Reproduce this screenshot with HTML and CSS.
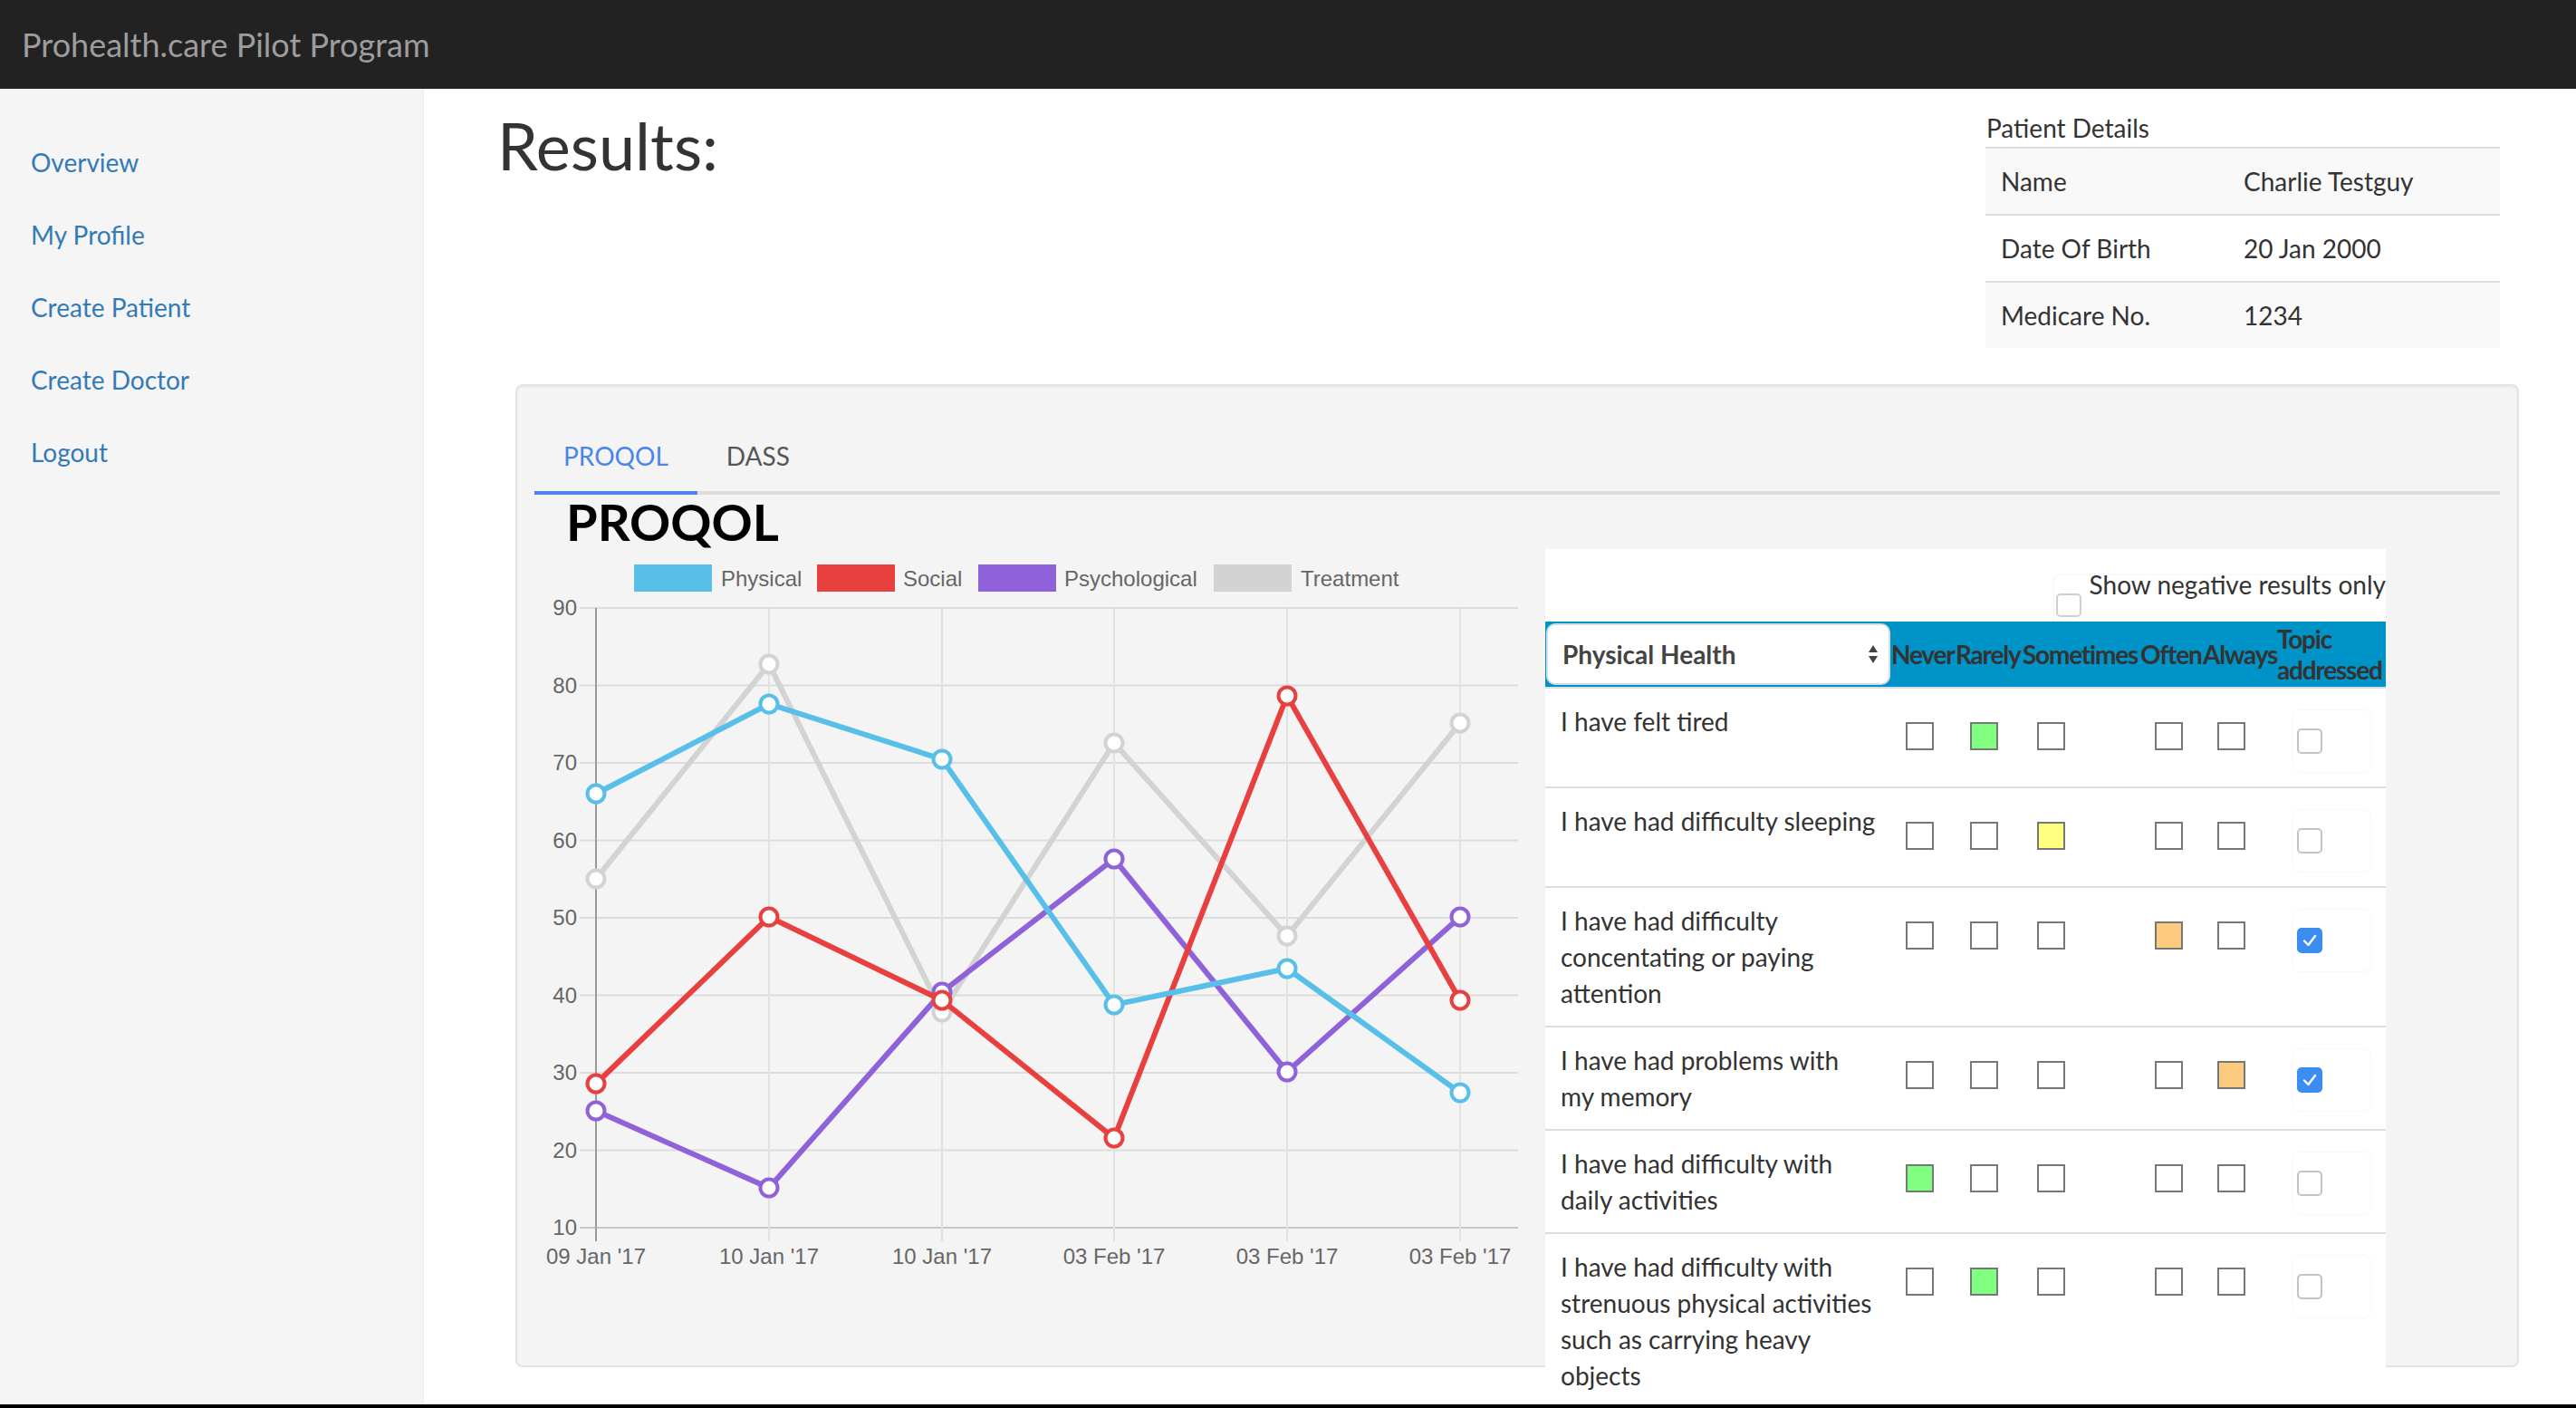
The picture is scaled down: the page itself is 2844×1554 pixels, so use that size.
FILE: index.html
```html
<!DOCTYPE html>
<html lang="en">
<head>
<meta charset="utf-8">
<title>Prohealth.care Pilot Program</title>
<link rel="stylesheet" href="styles.css">
</head>
<body>
<header class="navbar"><a class="brand" href="#">Prohealth.care Pilot Program</a></header>
<div class="layout">
  <nav class="sidebar">
    <ul class="side-nav">
      <li><a href="#">Overview</a></li>
      <li><a href="#">My Profile</a></li>
      <li><a href="#">Create Patient</a></li>
      <li><a href="#">Create Doctor</a></li>
      <li><a href="#">Logout</a></li>
    </ul>
  </nav>
  <main class="main">
    <div class="page-head">
      <h1 class="page-title">Results:</h1>
      <table class="details">
        <caption>Patient Details</caption>
        <tbody>
          <tr class="striped"><td class="dl">Name</td><td>Charlie Testguy</td></tr>
          <tr><td class="dl">Date Of Birth</td><td>20 Jan 2000</td></tr>
          <tr class="striped"><td class="dl">Medicare No.</td><td>1234</td></tr>
        </tbody>
      </table>
    </div>

    <section class="panel">
      <ul class="tabs">
        <li class="tab active">PROQOL</li>
        <li class="tab">DASS</li>
      </ul>
      <h2 class="survey-title">PROQOL</h2>
      <div class="survey-body">
        <div class="chart">
          <svg class="chart-svg" width="1100" height="820" viewBox="590 606 1100 820">
            <g>
              <rect class="lg-box" x="700" y="623" width="86" height="30" fill="#58c0e8"/>
              <text class="lg-text" x="796" y="647">Physical</text>
              <rect class="lg-box" x="902" y="623" width="86" height="30" fill="#e8403f"/>
              <text class="lg-text" x="997" y="647">Social</text>
              <rect class="lg-box" x="1080" y="623" width="86" height="30" fill="#9062da"/>
              <text class="lg-text" x="1175" y="647">Psychological</text>
              <rect class="lg-box" x="1340" y="623" width="86" height="30" fill="#d3d3d3"/>
              <text class="lg-text" x="1436" y="647">Treatment</text>
            </g>
            <g class="grid-h">
              <line x1="640" y1="671" x2="1676" y2="671"/>
              <line x1="640" y1="756.5" x2="1676" y2="756.5"/>
              <line x1="640" y1="842" x2="1676" y2="842"/>
              <line x1="640" y1="927.5" x2="1676" y2="927.5"/>
              <line x1="640" y1="1013" x2="1676" y2="1013"/>
              <line x1="640" y1="1098.5" x2="1676" y2="1098.5"/>
              <line x1="640" y1="1184" x2="1676" y2="1184"/>
              <line x1="640" y1="1269.5" x2="1676" y2="1269.5"/>
              <line class="base" x1="640" y1="1355" x2="1676" y2="1355"/>
            </g>
            <g class="grid-v">
              <line x1="849" y1="671" x2="849" y2="1370"/>
              <line x1="1040" y1="671" x2="1040" y2="1370"/>
              <line x1="1230" y1="671" x2="1230" y2="1370"/>
              <line x1="1421" y1="671" x2="1421" y2="1370"/>
              <line x1="1612" y1="671" x2="1612" y2="1370"/>
              <line class="axis" x1="658" y1="671" x2="658" y2="1370"/>
            </g>
            <g class="tick-y">
              <text x="637" y="679">90</text>
              <text x="637" y="764.5">80</text>
              <text x="637" y="850">70</text>
              <text x="637" y="935.5">60</text>
              <text x="637" y="1021">50</text>
              <text x="637" y="1106.5">40</text>
              <text x="637" y="1192">30</text>
              <text x="637" y="1277.5">20</text>
              <text x="637" y="1363">10</text>
            </g>
            <g class="tick-x">
              <text x="658" y="1395">09 Jan '17</text>
              <text x="849" y="1395">10 Jan '17</text>
              <text x="1040" y="1395">10 Jan '17</text>
              <text x="1230" y="1395">03 Feb '17</text>
              <text x="1421" y="1395">03 Feb '17</text>
              <text x="1612" y="1395">03 Feb '17</text>
            </g>

            <g class="series s-treat">
              <polyline points="658,970 849,733 1040,1117 1230,820 1421,1033 1612,798"/>
              <circle cx="658" cy="970" r="9.5"/><circle cx="849" cy="733" r="9.5"/><circle cx="1040" cy="1117" r="9.5"/>
              <circle cx="1230" cy="820" r="9.5"/><circle cx="1421" cy="1033" r="9.5"/><circle cx="1612" cy="798" r="9.5"/>
            </g>
            <g class="series s-psych">
              <polyline points="658,1226 849,1311 1040,1095 1230,948 1421,1183 1612,1012"/>
              <circle cx="658" cy="1226" r="9.5"/><circle cx="849" cy="1311" r="9.5"/><circle cx="1040" cy="1095" r="9.5"/>
              <circle cx="1230" cy="948" r="9.5"/><circle cx="1421" cy="1183" r="9.5"/><circle cx="1612" cy="1012" r="9.5"/>
            </g>
            <g class="series s-social">
              <polyline points="658,1196 849,1012 1040,1104 1230,1256 1421,768 1612,1104"/>
              <circle cx="658" cy="1196" r="9.5"/><circle cx="849" cy="1012" r="9.5"/><circle cx="1040" cy="1104" r="9.5"/>
              <circle cx="1230" cy="1256" r="9.5"/><circle cx="1421" cy="768" r="9.5"/><circle cx="1612" cy="1104" r="9.5"/>
            </g>
            <g class="series s-phys">
              <polyline points="658,876 849,777 1040,838 1230,1109 1421,1069 1612,1206"/>
              <circle cx="658" cy="876" r="9.5"/><circle cx="849" cy="777" r="9.5"/><circle cx="1040" cy="838" r="9.5"/>
              <circle cx="1230" cy="1109" r="9.5"/><circle cx="1421" cy="1069" r="9.5"/><circle cx="1612" cy="1206" r="9.5"/>
            </g>
          </svg>
        </div>

        <div class="results">
          <div class="filter">
            <label class="neg"><span class="neg-cb"></span><span class="neg-text">Show negative results only</span></label>
          </div>
          <table class="answers">
            <colgroup>
              <col class="c-q"><col class="c-never"><col class="c-rarely"><col class="c-some"><col class="c-often"><col class="c-always"><col class="c-topic">
            </colgroup>
            <thead>
              <tr>
                <th class="th-select">
                  <div class="select"><span>Physical Health</span>
                    <svg class="sel-arrows" width="12" height="24" viewBox="0 0 12 24"><polygon points="6,2 11,10 1,10"/><polygon points="1,14 11,14 6,22"/></svg>
                  </div>
                </th>
                <th>Never</th><th>Rarely</th><th>Sometimes</th><th>Often</th><th>Always</th><th>Topic addressed</th>
              </tr>
            </thead>
            <tbody>
              <tr>
                <td class="q">I have felt tired</td>
                <td><span class="box"></span></td><td><span class="box g"></span></td><td><span class="box"></span></td><td><span class="box"></span></td><td><span class="box"></span></td>
                <td class="topic"><div class="topic-box"><span class="tick"></span></div></td>
              </tr>
              <tr>
                <td class="q">I have had difficulty sleeping</td>
                <td><span class="box"></span></td><td><span class="box"></span></td><td><span class="box y"></span></td><td><span class="box"></span></td><td><span class="box"></span></td>
                <td class="topic"><div class="topic-box"><span class="tick"></span></div></td>
              </tr>
              <tr>
                <td class="q">I have had difficulty concentating or paying attention</td>
                <td><span class="box"></span></td><td><span class="box"></span></td><td><span class="box"></span></td><td><span class="box o"></span></td><td><span class="box"></span></td>
                <td class="topic"><div class="topic-box"><span class="tick on"><svg width="24" height="24" viewBox="0 0 24 24"><path d="M6 12.5 L10.5 17 L18 7"/></svg></span></div></td>
              </tr>
              <tr>
                <td class="q">I have had problems with my memory</td>
                <td><span class="box"></span></td><td><span class="box"></span></td><td><span class="box"></span></td><td><span class="box"></span></td><td><span class="box o"></span></td>
                <td class="topic"><div class="topic-box"><span class="tick on"><svg width="24" height="24" viewBox="0 0 24 24"><path d="M6 12.5 L10.5 17 L18 7"/></svg></span></div></td>
              </tr>
              <tr>
                <td class="q">I have had difficulty with daily activities</td>
                <td><span class="box g"></span></td><td><span class="box"></span></td><td><span class="box"></span></td><td><span class="box"></span></td><td><span class="box"></span></td>
                <td class="topic"><div class="topic-box"><span class="tick"></span></div></td>
              </tr>
              <tr>
                <td class="q">I have had difficulty with strenuous physical activities such as carrying heavy objects</td>
                <td><span class="box"></span></td><td><span class="box g"></span></td><td><span class="box"></span></td><td><span class="box"></span></td><td><span class="box"></span></td>
                <td class="topic"><div class="topic-box"><span class="tick"></span></div></td>
              </tr>
            </tbody>
          </table>
        </div>
      </div>
    </section>
  </main>
</div>
<div class="frame-edge"></div>
</body>
</html>
```

FILE: styles.css
```css
html, body {
  margin: 0;
  height: 100%;
  overflow: hidden;
}

body {
  font-family: Lato, "Open Sans", sans-serif;
  font-size: 28px;
  line-height: 40px;
  color: #333;
  background: #fff;
}

/* top bar */
.navbar {
  height: 98px;
  box-sizing: border-box;
  background: #222;
  display: flex;
  align-items: center;
  padding-left: 24px;
}

.brand {
  font-size: 36px;
  line-height: 40px;
  color: #9d9d9d;
  text-decoration: none;
}

.layout {
  display: flex;
  height: calc(100% - 98px);
}

/* sidebar */
.sidebar {
  width: 468px;
  flex: none;
  box-sizing: border-box;
  background: #f5f5f5;
  border-right: 1px solid #ececec;
  padding-top: 41px;
}

.side-nav {
  list-style: none;
  margin: 0;
  padding: 0;
}

.side-nav a {
  display: block;
  padding: 20px 34px;
  color: #337ab7;
  text-decoration: none;
}

/* main */
.main {
  flex: 1;
  min-width: 0;
  padding: 22px 63px 0 85px;
}

.page-head {
  display: flex;
  justify-content: space-between;
  align-items: flex-start;
}

.page-title {
  margin: 0 0 0 -4px;
  font-size: 72px;
  line-height: 80px;
  font-weight: 400;
  color: #333;
}

.details {
  margin: 1px 21px 0 0;
  width: 568px;
  border-collapse: collapse;
}

.details caption {
  caption-side: top;
  text-align: left;
  line-height: 40px;
  padding: 0 0 1px 1px;
  color: #333;
}

.details td {
  padding: 16px 17px;
  border-top: 2px solid #ddd;
  white-space: nowrap;
}

.details td.dl {
  width: 234px;
}

.details tr.striped td {
  background: #f9f9f9;
}

/* panel */
.panel {
  margin: 40px 0 0 16px;
  height: 1085px;
  box-sizing: border-box;
  background: #f4f4f4;
  border: 2px solid #e3e3e3;
  border-radius: 8px;
  box-shadow: inset 0 2px 2px rgba(0, 0, 0, 0.04);
  padding: 38px 19px 0;
}

.tabs {
  list-style: none;
  margin: 0;
  padding: 0;
  display: flex;
  border-bottom: 4px solid #ddd;
}

.tab {
  padding: 19px 32px;
  margin-bottom: -4px;
  border-bottom: 4px solid transparent;
  color: #555;
}

.tab.active {
  color: #4a86e8;
  border-bottom-color: #4a86e8;
}

.survey-title {
  margin: 0 0 0 35px;
  font-size: 56px;
  line-height: 60px;
  font-weight: 700;
  color: #000;
}

.survey-body {
  display: flex;
  align-items: flex-start;
}

/* chart */
.chart {
  width: 1100px;
  height: 820px;
  flex: none;
}

.chart-svg {
  display: block;
}

.lg-text,
.tick-y text,
.tick-x text {
  font-family: "Liberation Sans", Arial, sans-serif;
  font-size: 24px;
  fill: #666;
}

.tick-y text {
  text-anchor: end;
}

.tick-x text {
  text-anchor: middle;
}

.grid-h line {
  stroke: #dcdcdc;
  stroke-width: 2;
}

.grid-h line.base {
  stroke: #c6c6c6;
}

.grid-v line {
  stroke: #e2e2e2;
  stroke-width: 2;
}

.grid-v line.axis {
  stroke: #9a9a9a;
}

.series polyline {
  fill: none;
  stroke-width: 6;
  stroke-linejoin: miter;
}

.series circle {
  fill: #fff;
  stroke-width: 4;
}

.s-treat polyline, .s-treat circle { stroke: #d3d3d3; }
.s-psych polyline, .s-psych circle { stroke: #9062da; }
.s-social polyline, .s-social circle { stroke: #e8403f; }
.s-phys polyline, .s-phys circle { stroke: #58c0e8; }

/* results table */
.results {
  margin-left: 16px;
  width: 928px;
  flex: none;
  background: #fff;
}

.filter {
  height: 80px;
  box-sizing: border-box;
  padding-top: 29px;
  display: flex;
  justify-content: flex-end;
}

.neg {
  display: flex;
  align-items: flex-start;
  height: 51px;
  padding-left: 2px;
  border-radius: 8px 0 0 0;
  box-shadow: -1px -1px 3px rgba(0, 0, 0, 0.05);
}

.neg-cb {
  width: 28px;
  height: 26px;
  margin-top: 20px;
  box-sizing: border-box;
  border: 2px solid #cfcfcf;
  border-radius: 5px;
  background: #fff;
}

.neg-text {
  margin: -10px 0 0 9px;
  line-height: 40px;
  white-space: nowrap;
}

.answers {
  width: 928px;
  table-layout: fixed;
  border-collapse: collapse;
}

.c-q { width: 382px; }
.c-never { width: 71px; }
.c-rarely { width: 74px; }
.c-some { width: 130px; }
.c-often { width: 69px; }
.c-always { width: 82px; }
.c-topic { width: 120px; }

.answers th {
  background: #0093c7;
  padding: 2px 0;
  line-height: 34px;
  font-weight: 700;
  letter-spacing: -1.2px;
  text-align: left;
  vertical-align: middle;
  color: #333;
  border-bottom: 2px solid #d6dfe4;
}

.answers th.th-select {
  padding: 2px 1px;
  letter-spacing: 0;
}

.select {
  display: flex;
  align-items: center;
  justify-content: space-between;
  height: 68px;
  box-sizing: border-box;
  background: #fff;
  border: 2px solid #d5dde3;
  border-radius: 10px;
  padding: 0 11px 0 16px;
  color: #444;
  font-weight: 700;
}

.sel-arrows {
  fill: #444;
  display: block;
}

.answers td {
  padding: 16px 0 16px 16px;
  vertical-align: top;
  border-top: 2px solid #ddd;
}

.answers td.q {
  padding: 16px 17px;
  color: #333;
}

.box {
  display: block;
  width: 31px;
  height: 31px;
  box-sizing: border-box;
  margin-top: 21px;
  border: 2px solid #777;
  background: #fff;
}

.box.g { background: #80ff80; }
.box.y { background: #ffff80; }
.box.o { background: #fdcb80; }

.answers td.topic {
  padding-left: 18px;
}

.topic-box {
  width: 85px;
  height: 68px;
  box-sizing: border-box;
  margin-top: 8px;
  padding: 20px 0 0 4px;
  border-radius: 8px;
  box-shadow: 0 0 3px rgba(0, 0, 0, 0.07);
}

.tick {
  display: flex;
  align-items: center;
  justify-content: center;
  width: 28px;
  height: 28px;
  box-sizing: border-box;
  border: 2px solid #c4c4c4;
  border-radius: 5px;
  background: #fff;
}

.tick.on {
  background: #3b8ef0;
  border-color: #3b8ef0;
}

.tick svg {
  display: block;
}

.tick path {
  fill: none;
  stroke: #fff;
  stroke-width: 2.4;
  stroke-linecap: round;
  stroke-linejoin: round;
}

/* window edge at bottom of capture */
.frame-edge {
  position: fixed;
  left: 0;
  right: 0;
  bottom: 0;
  height: 4px;
  background: #000;
}
```
